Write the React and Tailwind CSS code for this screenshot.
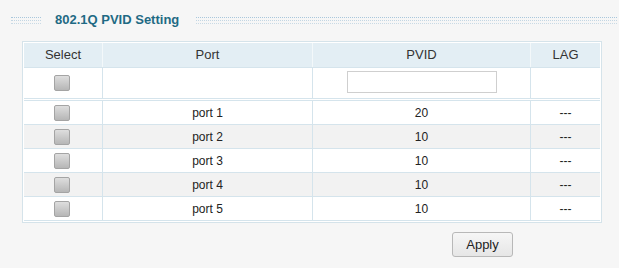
import React from "react";

const rows = [
  { port: "port 1", pvid: "20", alt: false },
  { port: "port 2", pvid: "10", alt: true },
  { port: "port 3", pvid: "10", alt: false },
  { port: "port 4", pvid: "10", alt: true },
  { port: "port 5", pvid: "10", alt: false },
];

function Dots({ className }) {
  return (
    <div className={"flex h-[7px] flex-col justify-between " + className}>
      <div className="border-t border-dotted border-[#a9c7dc]" />
      <div className="border-t border-dotted border-[#c3d6e3]" />
      <div className="border-t border-dotted border-[#c9dae5]" />
    </div>
  );
}

function Check() {
  return (
    <div className="h-[16px] w-[16px] rounded-[2px] border border-[#a4a4a4] bg-gradient-to-b from-[#dedede] to-[#b6b6b6]" />
  );
}

export default function App() {
  return (
    <div
      className="h-[268px] w-[619px] overflow-hidden bg-[#f6f6f6] text-[#222]"
      style={{ fontFamily: '"Liberation Sans", Arial, sans-serif' }}
    >
      <div className="flex h-[16px] items-center pl-[11px] pr-[2px] pt-0 mt-[12px]">
        <Dots className="w-[30px]" />
        <div className="ml-[14px] text-[13px] font-bold leading-[16px] text-[#1f6a84]">
          802.1Q PVID Setting
        </div>
        <Dots className="ml-[17px] flex-1" />
      </div>

      <div className="ml-[22px] mt-[13px] w-[580px] border border-[#d5e3ea] bg-white p-px">
        {/* header */}
        <div className="flex h-[25px] border-b border-[#d5e4ec] bg-[#e3eef4] text-[13px] text-[#333]">
          <div className="flex w-[78px] items-center justify-center">Select</div>
          <div className="flex w-[210px] items-center justify-center border-l border-[#f3f8fa]">Port</div>
          <div className="flex w-[218px] items-center justify-center border-l border-[#f3f8fa]">PVID</div>
          <div className="flex w-[70px] items-center justify-center border-l border-[#f3f8fa]">LAG</div>
        </div>
        {/* input row */}
        <div className="flex h-[31px] border-b border-[#d5e4ec]">
          <div className="flex w-[78px] items-center justify-center pr-[2px]">
            <Check />
          </div>
          <div className="w-[210px] border-l border-[#d5e4ec]" />
          <div className="flex w-[218px] items-center justify-center border-l border-[#d5e4ec] pb-[2px]">
            <input className="h-[22px] w-[150px] border border-[#cfcfcf] bg-white outline-none" />
          </div>
          <div className="w-[70px] border-l border-[#d5e4ec]" />
        </div>
        <div className="h-px bg-white" />
        <div className="border-t border-[#d5e4ec]">
          {rows.map((r) => (
            <div
              key={r.port}
              className={
                "flex h-[24px] border-b border-[#d5e4ec] text-[12px] " +
                (r.alt ? "bg-[#f2f2f2]" : "bg-white")
              }
            >
              <div className="flex w-[78px] items-center justify-center pr-[2px]">
                <Check />
              </div>
              <div className="flex w-[210px] items-center justify-center border-l border-[#d5e4ec]">
                {r.port}
              </div>
              <div className="flex w-[218px] items-center justify-center border-l border-[#d5e4ec]">
                {r.pvid}
              </div>
              <div className="flex w-[70px] items-center justify-center border-l border-[#d5e4ec]">
                ---
              </div>
            </div>
          ))}
        </div>
      </div>

      <div className="ml-[452px] mt-[9px]">
        <button className="h-[25px] w-[61px] rounded-[3px] border border-[#b8b8b8] bg-gradient-to-b from-[#f6f6f6] to-[#e6e6e6] text-[13px] leading-none text-[#222]">
          Apply
        </button>
      </div>
    </div>
  );
}
